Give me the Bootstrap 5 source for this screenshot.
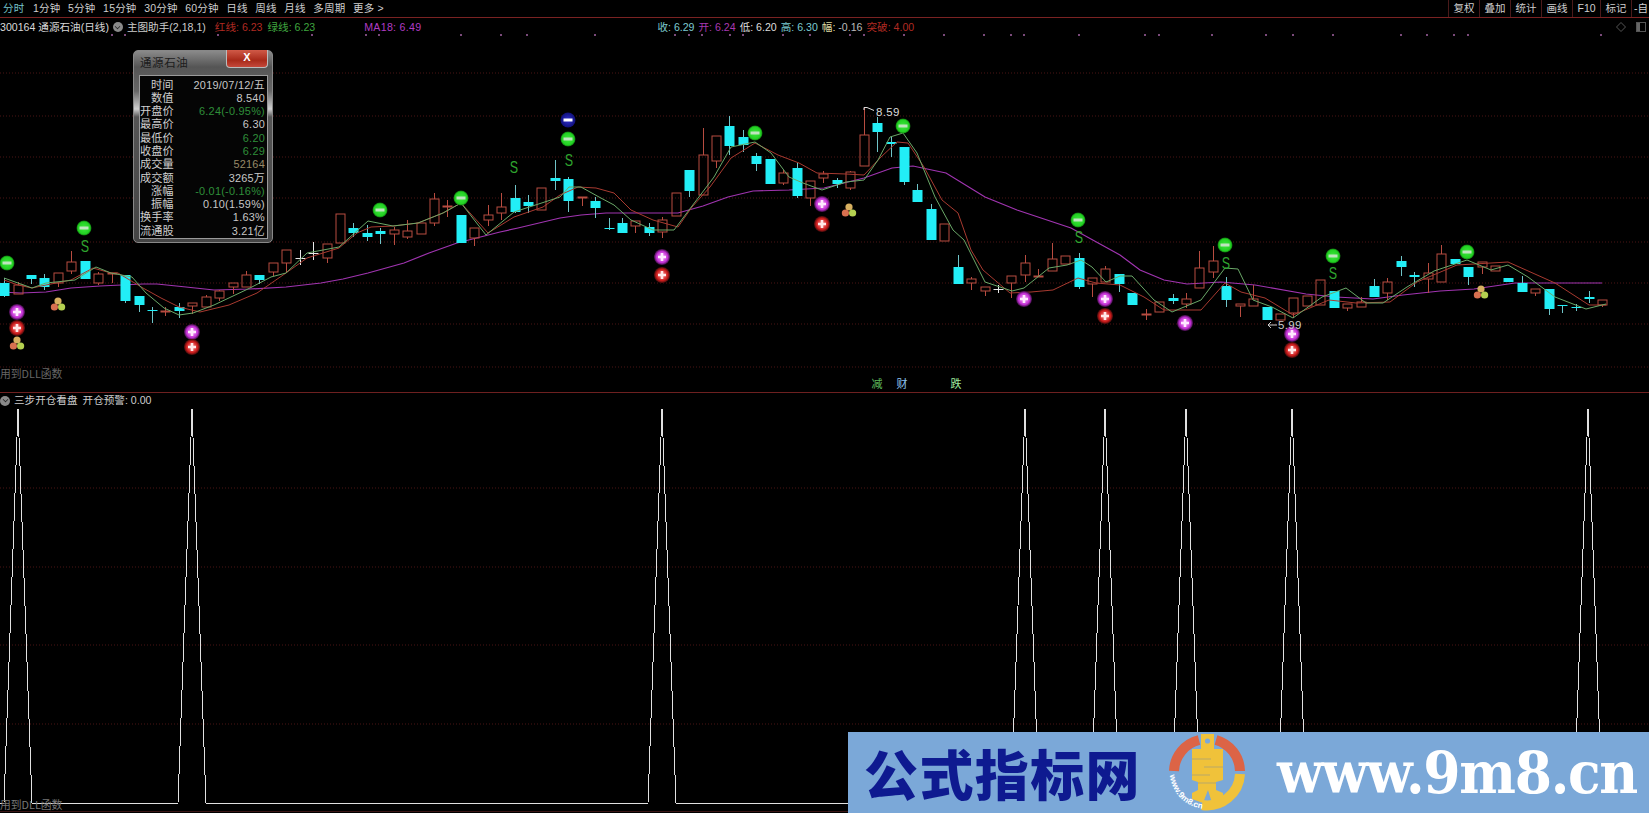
<!DOCTYPE html>
<html lang="zh-CN">
<head>
  <meta charset="UTF-8" />
  <meta name="viewport" content="width=device-width, initial-scale=1.0" />
  <title>通源石油(日线)</title>
  <link href="https://cdn.jsdelivr.net/npm/bootstrap@5.3.3/dist/css/bootstrap.min.css" rel="stylesheet" />
  <style>
    html, body { background: #000; margin: 0; height: 813px; overflow: hidden; }
    body { font-family: "Liberation Sans", "Noto Sans CJK SC", sans-serif; color: #ccc; }
    .app-shell { width: 1649px; height: 813px; overflow: hidden; position: relative; }

    .tool-bar { height: 18px; border-bottom: 1px solid #7a2222; font-size: 10.5px; line-height: 17px; }
    .period-list { gap: 7.6px; padding-left: 3px; letter-spacing: .2px; }
    .period-list span { color: #cfcfcf; }
    .period-list .period-on { color: #77c4cc; margin-right: 1px; }
    .tool-right { width: 201px; overflow: hidden; }
    .tool-right span { border-left: 1px solid #4a1a1a; height: 17px; padding: 0 4.5px; flex: none; color: #cfcfcf; }
    .tool-right .tool-cut { padding: 0 0 0 2px; }

    .price-pane { height: 375px; position: relative; border-bottom: 1px solid #6e2020; }
    .chart-canvas { position: absolute; left: 0; top: 0; display: block; }
    .info-row { position: relative; height: 17px; font-size: 10.6px; line-height: 17px; padding-top: 1px; white-space: nowrap; }
    .info-row i { font-style: normal; }
    .code-txt { color: #d8d8d8; }
    .round-ico { width: 10px; height: 10px; border-radius: 50%; background: #8a8a8a; margin: 0 4px 0 4px; position: relative; flex: none; }
    .round-ico::after { content: ""; position: absolute; left: 2.5px; top: 1.8px; width: 5px; height: 5px; border: solid #222; border-width: 0 1.4px 1.4px 0; transform: rotate(45deg) scale(.8); }
    .ma-group { gap: 5px; margin-left: 9px; }
    .ma-18 { margin-left: 49px; color: #b03cc4; letter-spacing: .3px; }
    .bar-group { margin-left: 236px; gap: 4px; }
    .c-red { color: #b02a22; } .c-green { color: #3fa53f; } .c-teal { color: #7ccad0; } .c-mag { color: #a838b0; }
    .c-white { color: #ddd; } .c-yel { color: #dfd9a0; } .c-dim { color: #bbb; }
    .side-ico { position: absolute; right: 1px; top: 3px; }

    .quote-pop { position: absolute; left: 133px; top: 32px; width: 140px; height: 193px; border: 1px solid #888; border-radius: 5px;
      background: linear-gradient(180deg, #8a8a8a 0, #555 16px, #666 40px, #d0d0d0 58px, #555 66px, #444 100%); }
    .pop-title { height: 24px; padding: 4px 0 0 6px; font-size: 11.5px; color: #1c1c1c; line-height: 16px; letter-spacing: .6px; }
    .pop-close { position: absolute; right: 4px; top: -1px; width: 42px; height: 18px; border-radius: 0 0 4px 4px; border: 1px solid #bbb; border-top: 0;
      background: linear-gradient(180deg, #d05a48 0, #a82a1a 60%, #c4483a 100%); color: #fff; font-size: 11px; line-height: 15px; font-weight: 700; text-align: center; }
    .pop-body { position: absolute; left: 5px; top: 24px; width: 129px; height: 164px; background: #050505; border: 1px solid #9a9a9a; padding: 2.5px 2px 0 0; }
    .pop-line { height: 13.3px; font-size: 10.9px; line-height: 13.3px; white-space: nowrap; }
    .pop-line b { font-weight: 400; width: 33.5px; font-size: 11.2px; text-align: right; color: #cfcfcf; flex: none; }
    .pop-line span { letter-spacing: .25px; color: #c8c8c8; }
    .pop-line .v-g { color: #2f8f3a; }
    .pop-line .v-t { color: #988a68; }

    .osc-pane { height: 420px; position: relative; }
    .osc-title { position: relative; height: 15px; font-size: 10.6px; line-height: 15px; padding-top: 0; }
    .osc-title .round-ico { margin: 0 4px 0 0; }
    .osc-gap { margin-left: 5px; }

    .promo-band { position: absolute; right: 0; bottom: 0; width: 801px; height: 81px; background: #7ba8d8; padding-left: 16px; overflow: hidden; }
    .promo-name { font-family: "Noto Sans CJK SC", sans-serif; font-weight: 900; font-size: 54px; line-height: 81px; color: #0e1a90; letter-spacing: 1.4px; width: 276px; flex: none; white-space: nowrap; }
    .promo-logo { margin-left: 27px; flex: none; display: block; }
    .promo-url { font-family: "DejaVu Serif", "Liberation Serif", serif; font-weight: 700; font-size: 57px; line-height: 81px; color: #fff; margin-left: 30px; white-space: nowrap; letter-spacing: -1.4px; transform: scaleX(.94); transform-origin: left center; width: 356px; flex: none; }
  </style>
</head>
<body>
  <div class="app-shell">
    <div class="tool-bar d-flex justify-content-between">
      <div class="period-list d-flex">
        <span class="period-on">分时</span><span>1分钟</span><span>5分钟</span><span>15分钟</span><span>30分钟</span><span>60分钟</span><span>日线</span><span>周线</span><span>月线</span><span>多周期</span><span>更多 &gt;</span>
      </div>
      <div class="tool-right d-flex">
        <span>复权</span><span>叠加</span><span>统计</span><span>画线</span><span>F10</span><span>标记</span><span class="tool-cut">-自</span>
      </div>
    </div>

    <div class="price-pane">
      <svg id="priceChart" class="chart-canvas" width="1649" height="375" viewBox="0 18 1649 375"></svg>

      <div class="info-row d-flex align-items-center">
        <span class="code-txt">300164 通源石油(日线)</span>
        <span class="round-ico"></span>
        <span>主图助手(2,18,1)</span>
        <div class="ma-group d-flex">
          <span class="c-red">红线: 6.23</span>
          <span class="c-green">绿线: 6.23</span>
        </div>
        <span class="ma-18">MA18: 6.49</span>
        <div class="bar-group d-flex">
          <span><i class="c-teal">收: 6.29</i></span>
          <span><i class="c-mag">开: 6.24</i></span>
          <span><i class="c-white">低: 6.20</i></span>
          <span><i class="c-teal">高: 6.30</i></span>
          <span><i class="c-yel">幅:</i> <i class="c-dim">-0.16</i></span>
          <span class="c-red">突破: 4.00</span>
        </div>
        <svg class="side-ico" width="32" height="12" viewBox="0 0 32 12">
          <path d="M5 1.5 9.5 6 5 10.5.5 6Z" fill="none" stroke="#555" />
          <rect x="20.5" y="1.5" width="9" height="9" fill="none" stroke="#555" />
          <rect x="21" y="2" width="3" height="8" fill="#666" />
        </svg>
      </div>

      <div class="card quote-pop">
        <div class="pop-title">通源石油</div>
        <div class="pop-close">X</div>
        <div class="pop-body">
          <div class="pop-line d-flex justify-content-between"><b>时间</b><span>2019/07/12/五</span></div>
          <div class="pop-line d-flex justify-content-between"><b>数值</b><span>8.540</span></div>
          <div class="pop-line d-flex justify-content-between"><b>开盘价</b><span class="v-g">6.24(-0.95%)</span></div>
          <div class="pop-line d-flex justify-content-between"><b>最高价</b><span>6.30</span></div>
          <div class="pop-line d-flex justify-content-between"><b>最低价</b><span class="v-g">6.20</span></div>
          <div class="pop-line d-flex justify-content-between"><b>收盘价</b><span class="v-g">6.29</span></div>
          <div class="pop-line d-flex justify-content-between"><b>成交量</b><span class="v-t">52164</span></div>
          <div class="pop-line d-flex justify-content-between"><b>成交额</b><span>3265万</span></div>
          <div class="pop-line d-flex justify-content-between"><b>涨幅</b><span class="v-g">-0.01(-0.16%)</span></div>
          <div class="pop-line d-flex justify-content-between"><b>振幅</b><span>0.10(1.59%)</span></div>
          <div class="pop-line d-flex justify-content-between"><b>换手率</b><span>1.63%</span></div>
          <div class="pop-line d-flex justify-content-between"><b>流通股</b><span>3.21亿</span></div>
        </div>
      </div>
    </div>

    <div class="osc-pane">
      <svg id="oscChart" class="chart-canvas" width="1649" height="420" viewBox="0 393 1649 420"></svg>
      <div class="osc-title d-flex align-items-center">
        <span class="round-ico ms-0"></span>
        <span>三步开仓看盘</span>
        <span class="osc-gap">开仓预警: 0.00</span>
      </div>
    </div>

    <div class="promo-band d-flex align-items-center">
      <div class="promo-name">公式指标网</div>
      <svg class="promo-logo" width="80" height="81" viewBox="-40 -40 80 81">
        <defs><path id="logoRing" d="M-37 3A37 37 0 0 0 -2 37" /></defs>
        <g fill="none" stroke-width="10">
          <path d="M-33 -1A33 33 0 0 1 -8 -32" stroke="#dc6446" />
          <path d="M9 -32A33 33 0 0 1 33 -1" stroke="#dc6446" />
          <path d="M33 2A33 33 0 0 1 -5 33" stroke="#f0c23a" />
        </g>
        <path d="M-6 -38H7V-23H16V8L9 10V18L16 21V27L5 31L1 18L-4 31L-15 27V21L-9 18V10L-15 8V-23H-6Z" fill="#f0c23a" />
        <circle cx="0.5" cy="-31" r="2.6" fill="#7ba8d8" />
        <g stroke="#b8a868" stroke-width="1.2">
          <path d="M-15 -13H4M-3 -5H16M-15 3H3M-9 11H9" />
        </g>
        <text font-family="Liberation Sans, sans-serif" font-size="8.4" font-weight="700" fill="#fff"><textPath href="#logoRing">www.9m8.cn</textPath></text>
      </svg>
      <div class="promo-url">www.9m8.cn</div>
    </div>
  </div>

  <script src="https://cdn.jsdelivr.net/npm/bootstrap@5.3.3/dist/js/bootstrap.bundle.min.js"></script>
  <script>
    // type, high, body top, body bottom, low
    const bars = [
      "c,278,283,296,297","r,282,285,294,294","c,275,275,279,284","c,274,278,287,290","r,273,273,283,287","r,251,262,271,274","c,261,261,279,279","r,272,274,283,285","r,273,273,274,283","c,275,275,301,303",
      "c,296,296,305,312","c,307,310,311,323","r,307,311,312,316","c,303,307,311,318","r,303,303,306,314","r,295,297,307,307","r,290,291,298,301","r,283,283,287,294","r,271,275,287,287","c,275,275,280,284",
      "r,263,263,272,276","r,250,250,263,272","w,250,258,259,265","w,242,253,254,260","r,244,244,258,263","r,214,214,243,243","c,223,228,233,237","c,225,233,237,241","c,228,231,234,244","r,227,230,234,245",
      "r,220,231,237,239","r,223,223,234,234","r,193,199,223,226","r,200,206,207,217","c,215,215,243,243","r,228,228,238,246","r,205,215,220,226","r,193,207,213,220","c,185,198,212,213","c,195,202,206,213",
      "r,188,188,210,210","c,160,178,181,190",
      "c,177,179,201,212","r,197,197,198,206","c,197,201,208,218","c,218,228,229,230","c,218,223,233,233","r,221,221,226,233","c,223,227,233,236","r,217,220,232,238","r,193,193,216,216","c,170,170,191,197",
      "r,128,155,195,195","r,136,136,161,168","c,116,126,146,155","c,130,137,145,152","c,153,156,164,171","c,159,159,184,184","r,170,173,183,185","c,163,168,196,198","r,181,181,198,206","r,171,174,178,183",
      "c,178,180,184,188","r,171,172,188,190","r,108,135,166,166","c,117,123,132,152","c,137,142,144,157","c,147,147,182,185","c,184,190,202,202","c,204,209,240,240","r,224,224,241,241","c,255,267,284,284",
      "r,277,279,283,290","r,287,287,291,296","w,285,289,290,293","r,276,276,283,298","r,255,263,275,282","r,269,276,277,277","r,243,259,271,271","r,256,256,264,264","c,253,258,287,289","r,278,278,284,297",
      "r,266,269,282,282","c,274,274,284,292",
      "c,293,293,305,305","r,309,314,315,320","r,302,302,312,312","c,294,298,301,304","r,293,299,304,308","r,251,268,288,288","r,246,261,272,278","c,277,286,300,307","r,304,304,306,317","r,285,299,306,306",
      "c,307,307,320,320","r,314,314,320,320","r,298,298,313,318","r,296,296,306,306","r,280,280,305,305","c,291,291,308,308","r,304,304,308,311","r,297,302,307,307","c,279,286,297,297","r,278,282,293,300",
      "c,256,261,267,276","c,272,275,277,287","r,263,273,279,293","r,245,254,282,282","c,259,259,264,264","c,267,267,277,285","r,262,262,267,274","r,266,266,271,271","c,278,278,282,282","c,276,283,292,292",
      "r,289,289,293,296","c,289,289,309,315","c,305,305,306,313","c,304,307,308,311","c,291,297,299,303","r,300,300,305,307"
    ];

    const maPurple = [[0,292],[21,293],[46,292],[71,288],[100,286],[143,284],[157,284],[186,287],[214,290],[250,289],[286,287],[321,283],[343,279],[368,273],[404,263],[429,253],[457,243],[500,232],[518,228],[560,218],[581,215],[606,213],[678,213],[703,206],[728,197],[753,191],[789,190],[824,188],[864,178],[892,168],[913,166],[946,173],[985,197],[1017,210],[1071,228],[1120,255],[1140,270],[1164,280],[1187,284],[1221,282],[1255,285],[1306,294],[1336,297],[1373,299],[1403,295],[1440,291],[1474,289],[1515,283],[1552,283],[1602,283]];
    const maGreen = [[4,278],[18,283],[32,288],[46,283],[75,280],[96,267],[111,273],[132,277],[146,293],[164,308],[179,315],[193,313],[214,305],[250,288],[271,277],[286,273],[307,253],[339,247],[368,221],[393,226],[418,223],[443,213],[461,203],[486,235],[514,212],[560,197],[569,187],[581,187],[599,197],[614,205],[631,220],[653,230],[674,230],[689,210],[714,177],[731,147],[755,142],[771,153],[789,177],[803,183],[822,190],[846,182],[864,180],[878,160],[890,137],[903,133],[917,153],[935,197],[953,230],[964,240],[974,260],[985,282],[1012,291],[1024,288],[1049,268],[1067,265],[1081,260],[1092,267],[1106,282],[1120,276],[1132,276],[1154,300],[1172,312],[1201,300],[1225,268],[1238,269],[1253,300],[1272,307],[1293,318],[1322,297],[1346,288],[1366,303],[1383,303],[1407,287],[1434,271],[1467,260],[1491,270],[1508,265],[1528,277],[1555,297],[1586,309],[1606,304]];
    const maRed = [[4,280],[18,285],[32,288],[46,285],[71,280],[93,268],[111,273],[118,273],[143,288],[161,298],[179,307],[200,312],[229,305],[257,293],[286,273],[307,258],[339,248],[357,233],[371,227],[393,226],[418,223],[443,213],[461,203],[479,223],[488,233],[514,217],[543,207],[560,195],[578,187],[596,188],[614,193],[631,210],[653,220],[678,227],[692,207],[710,187],[731,158],[755,143],[778,155],[799,163],[817,173],[846,174],[864,175],[881,157],[897,142],[908,143],[924,167],[942,200],[958,213],[971,250],[983,270],[1010,293],[1031,292],[1053,290],[1078,278],[1096,283],[1120,285],[1144,297],[1164,310],[1201,310],[1225,283],[1241,292],[1265,298],[1293,315],[1329,300],[1356,303],[1390,302],[1417,282],[1457,265],[1508,262],[1555,283],[1589,305],[1606,305]];

    const gridMain = [73,116,157,198,242,283,324,367];
    const gridOsc = [488,567,645,724];
    const topDots = [112,125,218,312,366,379,461,501,527,595,675,689,702,730,743,783,810,850,864,904,944,984,1011,1024,1079,1145,1159,1212,1266,1293,1333,1401,1427,1454,1468,1601];
    const peaks = [18,192,662,1025,1105,1186,1292,1588];

    const greenDots = [[7,263],[84,228],[380,210],[461,198],[568,139],[755,133],[903,126],[1078,220],[1225,245],[1333,256],[1467,252]];
    const magentaDots = [[17,312],[192,332],[822,204],[662,257],[1024,299],[1105,299],[1185,323],[1292,334]];
    const redDots = [[17,328],[192,347],[822,224],[662,275],[1105,316],[1292,350]];
    const triDots = [[58,305],[17,344],[849,211],[1481,293]];
    const sMarks = [[85,246],[514,167],[569,160],[1079,237],[1226,263],[1333,273]];

    const line = (pts, color, w) => `<polyline points="${pts.map(p => p.join(",")).join(" ")}" fill="none" stroke="${color}" stroke-width="${w}" />`;
    const dotted = (y, c) => `<line x1="0" x2="1649" y1="${y}" y2="${y}" stroke="${c}" stroke-dasharray="1 2" />`;

    let main = `<defs>
      <radialGradient id="gGreen"><stop offset="0" stop-color="#3ee83e"/><stop offset=".8" stop-color="#22d022"/><stop offset="1" stop-color="#0c6a0c"/></radialGradient>
      <radialGradient id="gMag"><stop offset="0" stop-color="#ffb0ff"/><stop offset=".7" stop-color="#c230d4"/><stop offset="1" stop-color="#3a0c40"/></radialGradient>
      <radialGradient id="gRed"><stop offset="0" stop-color="#ff9a9a"/><stop offset=".7" stop-color="#cc1c1c"/><stop offset="1" stop-color="#400a0a"/></radialGradient>
      <radialGradient id="gBlue"><stop offset="0" stop-color="#3030d0"/><stop offset="1" stop-color="#10107a"/></radialGradient>
    </defs>`;
    gridMain.forEach(y => { main += dotted(y, "#4a1414"); });
    topDots.forEach(x => { main += `<rect x="${x - 1}" y="34" width="2" height="2" fill="#7a4a7a" />`; });

    main += line(maPurple, "#a034b0", 1.2);

    bars.forEach((s, i) => {
      const [t, hi, top, bot, lo] = s.split(",").map((v, k) => k ? +v : v);
      const x = Math.round(4.2 + 13.43 * i) + .5;
      const c = t === "c" ? "#22eef6" : t === "w" ? "#e8e8e8" : "#b84c40";
      const wick = t === "c" ? "#6fc4c8" : c;
      if (hi < top) main += `<line x1="${x}" x2="${x}" y1="${hi}" y2="${top}" stroke="${wick}" />`;
      if (lo > bot) main += `<line x1="${x}" x2="${x}" y1="${bot}" y2="${lo}" stroke="${wick}" />`;
      if (t === "r") main += `<rect x="${x - 4.5}" y="${top}" width="9" height="${Math.max(bot - top, 1)}" fill="none" stroke="${c}" />`;
      else main += `<rect x="${x - 5}" y="${top}" width="10" height="${Math.max(bot - top, 1)}" fill="${c}" />`;
    });

    main += line(maRed, "#a83a30", 1) + line(maGreen, "#6aa868", 1);

    greenDots.forEach(([x, y]) => {
      main += `<circle cx="${x}" cy="${y}" r="7.5" fill="url(#gGreen)" /><rect x="${x - 4.5}" y="${y - 1.5}" width="9" height="3" fill="#bfe4bf" />`;
    });
    main += `<circle cx="568" cy="120" r="7.5" fill="url(#gBlue)" /><rect x="563.5" y="118.5" width="9" height="3" fill="#fff" />`;
    magentaDots.forEach(([x, y]) => {
      main += `<circle cx="${x}" cy="${y}" r="8" fill="url(#gMag)" /><path d="M${x - 4} ${y}h8M${x} ${y - 4}v8" stroke="#ffe8ff" stroke-width="2.6" />`;
    });
    redDots.forEach(([x, y]) => {
      main += `<circle cx="${x}" cy="${y}" r="8" fill="url(#gRed)" /><path d="M${x - 4} ${y}h8M${x} ${y - 4}v8" stroke="#ffe8e8" stroke-width="2.6" />`;
    });
    triDots.forEach(([x, y]) => {
      main += `<circle cx="${x}" cy="${y - 4}" r="3.6" fill="#d8b060" /><circle cx="${x - 3.6}" cy="${y + 2}" r="3.6" fill="#d87050" /><circle cx="${x + 3.6}" cy="${y + 2}" r="3.6" fill="#b4d050" />`;
    });
    sMarks.forEach(([x, y]) => {
      main += `<text transform="translate(${x} ${y + 6}) scale(.78 1)" text-anchor="middle" font-family="Liberation Sans, sans-serif" font-size="16" fill="#2fa52f">S</text>`;
    });

    // peak and trough labels
    main += `<path d="M864 110V107.5h3l7 3" fill="none" stroke="#ddd" />`;
    main += `<text x="876" y="116" font-family="Liberation Sans, sans-serif" font-size="11.5" letter-spacing=".3" fill="#ddd">8.59</text>`;
    main += `<path d="M1277 325h-9m3-3-3 3 3 3" fill="none" stroke="#ccc" />`;
    main += `<text x="1278" y="329" font-family="Liberation Sans, sans-serif" font-size="11.5" letter-spacing=".3" fill="#ccc">5.99</text>`;

    const cjk = 'font-family="Noto Sans CJK SC, sans-serif"';
    main += `<text x="0" y="378" ${cjk} font-size="10.8" fill="#666">用到DLL函数</text>`;
    main += `<text x="877" y="388" text-anchor="middle" ${cjk} font-size="11" fill="#5cb85c">减</text>`;
    main += `<text x="902" y="388" text-anchor="middle" ${cjk} font-size="11" fill="#8fc4f0">财</text>`;
    main += `<text x="956" y="388" text-anchor="middle" ${cjk} font-size="11" fill="#9ee89e">跌</text>`;
    document.getElementById("priceChart").innerHTML = main;

    let osc = "";
    gridOsc.forEach(y => { osc += dotted(y, "#4a1414"); });
    const baseY = 803, topY = 409;
    const pts = [[-1, baseY]];
    peaks.forEach(x => { pts.push([x - 14, baseY], [x, topY], [x + 14, baseY]); });
    pts.push([1650, baseY]);
    osc += `<g shape-rendering="crispEdges">${line(pts, "#e0e0e0", 1)}</g>`;
    osc += `<line x1="0" x2="1649" y1="811.5" y2="811.5" stroke="#3a1414" />`;
    osc += `<text x="0" y="809" ${cjk} font-size="10.8" fill="#777">用到DLL函数</text>`;
    document.getElementById("oscChart").innerHTML = osc;
  </script>
</body>
</html>
